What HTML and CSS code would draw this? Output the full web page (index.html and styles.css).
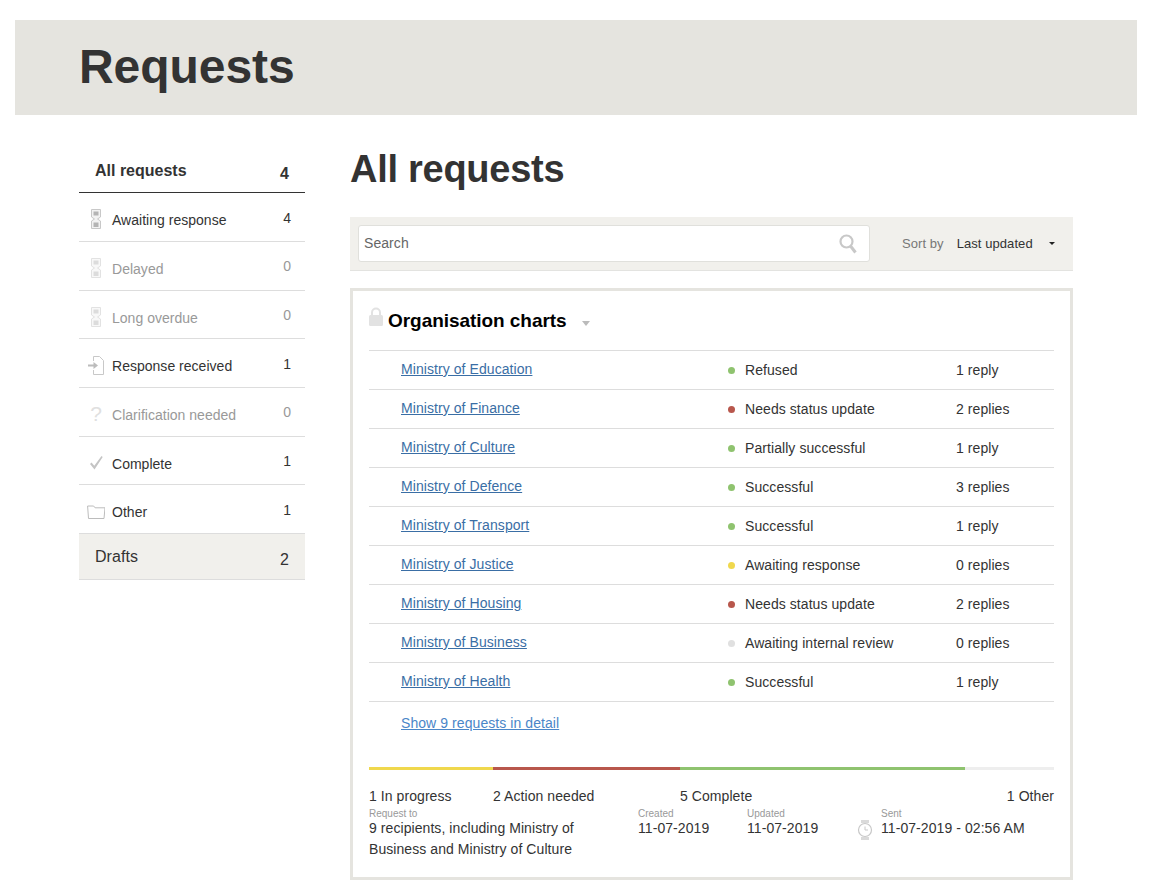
FILE: index.html
```html
<!DOCTYPE html>
<html lang="en">
<head>
  <meta charset="UTF-8" />
  <meta name="viewport" content="width=device-width, initial-scale=1.0" />
  <title>Requests</title>
  <link rel="stylesheet" href="styles.css">
</head>
<body>
  <div class="banner">
    <h1>Requests</h1>
  </div>
  <div class="layout">
    <nav class="sidebar">
      <div class="side-head"><span>All requests</span><span class="side-head-num">4</span></div>
      <a class="side-row">
        <svg class="side-icon" viewBox="0 0 18 22"><path d="M4.500 1.500h9v7.500l-3 2 3 2v7.500h-9V13l3-2-3-2z" fill="#f2f2f2" stroke="#c8c8c8"/><rect x="6.500" y="3.500" width="5" height="4" fill="#b4b4b4"/><rect x="6.500" y="14.500" width="5" height="4.500" fill="#b4b4b4"/></svg>
        <span class="side-label">Awaiting response</span><span class="side-num">4</span>
      </a>
      <a class="side-row muted">
        <svg class="side-icon" viewBox="0 0 18 22"><path d="M4.500 1.500h9v7.500l-3 2 3 2v7.500h-9V13l3-2-3-2z" fill="#f8f8f8" stroke="#e2e2e2"/><rect x="6.500" y="3.500" width="5" height="4" fill="#dcdcdc"/><rect x="6.500" y="14.500" width="5" height="4.500" fill="#dcdcdc"/></svg>
        <span class="side-label">Delayed</span><span class="side-num">0</span>
      </a>
      <a class="side-row muted">
        <svg class="side-icon" viewBox="0 0 18 22"><path d="M4.500 1.500h9v7.500l-3 2 3 2v7.500h-9V13l3-2-3-2z" fill="#f8f8f8" stroke="#e2e2e2"/><rect x="6.500" y="3.500" width="5" height="4" fill="#dcdcdc"/><rect x="6.500" y="14.500" width="5" height="4.500" fill="#dcdcdc"/></svg>
        <span class="side-label">Long overdue</span><span class="side-num">0</span>
      </a>
      <a class="side-row">
        <svg class="side-icon" viewBox="0 0 18 22"><path d="M6.500 7V2.500h6l4 4v14h-10V16" fill="none" stroke="#c8c8c8"/><path d="M1 10.500h5.500V8l4.500 3.500-4.500 3.500v-2.500H1z" fill="#bcbcbc"/></svg>
        <span class="side-label">Response received</span><span class="side-num">1</span>
      </a>
      <a class="side-row muted">
        <span class="side-icon side-glyph">?</span>
        <span class="side-label">Clarification needed</span><span class="side-num">0</span>
      </a>
      <a class="side-row">
        <svg class="side-icon" viewBox="0 0 18 22"><path d="M3 12l1.500-1.500 2.800 3.200L14.500 4l1.200 1L7.500 17.500z" fill="#c4c4c4"/></svg>
        <span class="side-label">Complete</span><span class="side-num">1</span>
      </a>
      <a class="side-row">
        <svg class="side-icon" viewBox="0 0 18 22"><path d="M.6 6h6l1.500 1.800H18l-1 10.700H1.500z" fill="none" stroke="#bcbcbc"/></svg>
        <span class="side-label">Other</span><span class="side-num">1</span>
      </a>
      <div class="side-drafts"><span>Drafts</span><span class="side-drafts-num">2</span></div>
    </nav>

    <main class="content">
      <h2>All requests</h2>
      <div class="toolbar">
        <div class="search">
          <span class="search-text">Search</span>
          <svg class="search-icon" viewBox="0 0 18 20"><circle cx="7.500" cy="7.500" r="6" fill="none" stroke="#c8c8c8" stroke-width="2.200"/><path d="M11.500 12l5 6.500" stroke="#c8c8c8" stroke-width="3"/></svg>
        </div>
        <span class="sort-label">Sort by</span>
        <span class="sort-value">Last updated</span>
        <span class="sort-caret"></span>
      </div>

      <section class="card">
        <div class="card-title">
          <svg class="lock" viewBox="0 0 14 19"><path d="M3 9V5.500a4 4 0 0 1 8 0V9" fill="none" stroke="#e2e2e2" stroke-width="2"/><rect x="0" y="8" width="14" height="11" rx="1.500" fill="#e2e2e2"/></svg>
          <h3>Organisation charts</h3>
          <span class="title-caret"></span>
        </div>
        <ul class="batch">
          <li><a href="#">Ministry of Education</a><span class="status"><i class="dot green"></i>Refused</span><span class="replies">1 reply</span></li>
          <li><a href="#">Ministry of Finance</a><span class="status"><i class="dot red"></i>Needs status update</span><span class="replies">2 replies</span></li>
          <li><a href="#">Ministry of Culture</a><span class="status"><i class="dot green"></i>Partially successful</span><span class="replies">1 reply</span></li>
          <li><a href="#">Ministry of Defence</a><span class="status"><i class="dot green"></i>Successful</span><span class="replies">3 replies</span></li>
          <li><a href="#">Ministry of Transport</a><span class="status"><i class="dot green"></i>Successful</span><span class="replies">1 reply</span></li>
          <li><a href="#">Ministry of Justice</a><span class="status"><i class="dot yellow"></i>Awaiting response</span><span class="replies">0 replies</span></li>
          <li><a href="#">Ministry of Housing</a><span class="status"><i class="dot red"></i>Needs status update</span><span class="replies">2 replies</span></li>
          <li><a href="#">Ministry of Business</a><span class="status"><i class="dot grey"></i>Awaiting internal review</span><span class="replies">0 replies</span></li>
          <li><a href="#">Ministry of Health</a><span class="status"><i class="dot green"></i>Successful</span><span class="replies">1 reply</span></li>
        </ul>
        <a class="show-all" href="#">Show 9 requests in detail</a>

        <div class="progress">
          <div class="seg yellow" style="width: 124px"></div>
          <div class="seg red" style="width: 187px"></div>
          <div class="seg green" style="width: 285px"></div>
          <div class="seg grey" style="width: 89px"></div>
        </div>
        <div class="progress-labels">
          <span style="width: 124px">1 In progress</span>
          <span style="width: 187px">2 Action needed</span>
          <span style="width: 285px">5 Complete</span>
          <span class="last" style="width: 89px">1 Other</span>
        </div>

        <div class="meta">
          <div class="meta-to"><small>Request to</small>9 recipients, including Ministry of Business and Ministry of Culture</div>
          <div class="meta-created"><small>Created</small>11-07-2019</div>
          <div class="meta-updated"><small>Updated</small>11-07-2019</div>
          <svg class="watch" viewBox="0 0 16 22"><path d="M4 1h8v3H4zM4 18h8v3H4z" fill="#dadada"/><circle cx="8" cy="11" r="6.500" fill="#fff" stroke="#c8c8c8" stroke-width="1.200"/><path d="M8 7.500V11h3" fill="none" stroke="#c8c8c8"/></svg>
          <div class="meta-sent"><small>Sent</small>11-07-2019 - 02:56 AM</div>
        </div>
      </section>
    </main>
  </div>
</body>
</html>
```

FILE: styles.css
```css
body {
  font-family: "Liberation Sans", Arial, sans-serif;
  font-size: 14px;
  letter-spacing: 0.07px;
  color: #333;
  background: #fff;
  margin: 0;
  padding: 20px 18px 0 15px;
}
.banner {
  background: #e5e4df;
  height: 95px;
  padding-left: 64px;
  box-sizing: border-box;
}
h1 {
  margin: 0;
  font-size: 48px;
  line-height: 93px;
  font-weight: bold;
  letter-spacing: -0.05px;
}
.layout {
  display: flex;
  padding: 0 64px;
}

/* sidebar */
.sidebar {
  width: 226px;
  margin-top: 37px;
  margin-right: 45px;
  flex: none;
}
.side-head {
  display: flex;
  justify-content: space-between;
  height: 40.3px;
  padding: 0 16px;
  border-bottom: 1px solid #333;
  font-size: 16px;
  font-weight: bold;
  line-height: 37px;
  letter-spacing: 0;
}
.side-head-num {
  line-height: 43px;
}
.side-row {
  display: flex;
  align-items: center;
  height: 47.7px;
  padding-right: 14px;
  border-bottom: 1px solid #ddd;
  color: #333;
  letter-spacing: 0.02px;
}
.side-row.muted {
  color: #999;
}
.side-icon {
  width: 18px;
  height: 22px;
  margin: 4px 7px 0 8px;
  flex: none;
}
.side-glyph {
  font-size: 21px;
  line-height: 22px;
  text-align: center;
  color: #e0e0e0;
}
.side-label {
  flex: 1;
  padding-top: 6px;
}
.side-num {
  padding-top: 1px;
}
.side-drafts {
  display: flex;
  justify-content: space-between;
  background: #f1f0ec;
  height: 45px;
  padding: 0 16px;
  border-bottom: 1px solid #ddd;
  font-size: 16px;
  line-height: 46px;
}
.side-drafts-num {
  line-height: 52px;
}

/* main column */
.content {
  width: 723px;
  flex: none;
}
h2 {
  margin: 32px 0 26px;
  font-size: 38px;
  line-height: 44px;
  font-weight: bold;
  letter-spacing: -0.27px;
}
.toolbar {
  display: flex;
  align-items: center;
  background: #f1f0ec;
  height: 54px;
  padding-left: 8px;
  border-bottom: 1px solid #e3e3e0;
  box-sizing: border-box;
}
.search {
  display: flex;
  justify-content: space-between;
  align-items: center;
  box-sizing: border-box;
  width: 512px;
  height: 37px;
  padding: 0 5px;
  background: #fff;
  border: 1px solid #e0e0dc;
  border-radius: 3px;
  color: #666;
  margin-right: 32px;
}
.search-text {
  padding-bottom: 2px;
}
.search-icon {
  width: 18px;
  height: 20px;
  margin-right: 7px;
}
.sort-label {
  font-size: 13px;
  color: #777;
  margin-right: 13px;
}
.sort-value {
  font-size: 13px;
  color: #333;
  margin-right: 16px;
}
.sort-caret {
  border: 3px solid transparent;
  border-top: 3px solid #222;
  margin-top: 3px;
}

/* request card */
.card {
  margin-top: 17px;
  border: 3px solid #e5e4df;
  padding: 0 16px 17px;
}
.card-title {
  display: flex;
  align-items: center;
  height: 59px;
  border-bottom: 1px solid #ddd;
}
.lock {
  width: 14px;
  height: 19px;
  margin-right: 5px;
  margin-top: -8px;
}
h3 {
  margin: 0;
  font-size: 19px;
  font-weight: bold;
  color: #000;
  letter-spacing: -0.05px;
}
.title-caret {
  border: 4px solid transparent;
  border-top: 5px solid #bbb;
  margin: 9px 0 0 15px;
}
.batch {
  list-style: none;
  margin: 0;
  padding: 0;
}
.batch li {
  display: flex;
  align-items: center;
  height: 38px;
  border-bottom: 1px solid #ddd;
}
.batch a {
  width: 327px;
  margin-left: 32px;
  margin-top: -2px;
  flex: none;
}
a {
  color: #3a6ea5;
}
.status {
  width: 228px;
  flex: none;
  color: #333;
}
.dot {
  display: inline-block;
  width: 7px;
  height: 7px;
  border-radius: 50%;
  margin-right: 10px;
  vertical-align: 1px;
}
.dot.green { background: #8fc36f; }
.dot.red { background: #b8574c; }
.dot.yellow { background: #f0d84d; }
.dot.grey { background: #e0e0e0; }
.show-all {
  display: block;
  margin: 13px 0 0 32px;
  color: #4a86c8;
}
.progress {
  display: flex;
  margin-top: 36px;
}
.seg {
  height: 3px;
}
.seg.yellow { background: #f0d84d; }
.seg.red { background: #b8574c; }
.seg.green { background: #8fc36f; }
.seg.grey { background: #eee; }
.progress-labels {
  display: flex;
  margin-top: 17px;
  line-height: 18px;
}
.progress-labels .last {
  text-align: right;
}
.meta {
  display: flex;
  line-height: 21px;
}
.meta small {
  display: block;
  font-size: 10px;
  line-height: 9px;
  color: #999;
  margin-top: 4px;
  letter-spacing: 0;
}
.meta-to {
  width: 238px;
  margin-right: 31px;
}
.meta-created {
  width: 109px;
}
.meta-updated {
  width: 110px;
}
.watch {
  width: 16px;
  height: 22px;
  margin: 14px 8px 0 0;
}
```
